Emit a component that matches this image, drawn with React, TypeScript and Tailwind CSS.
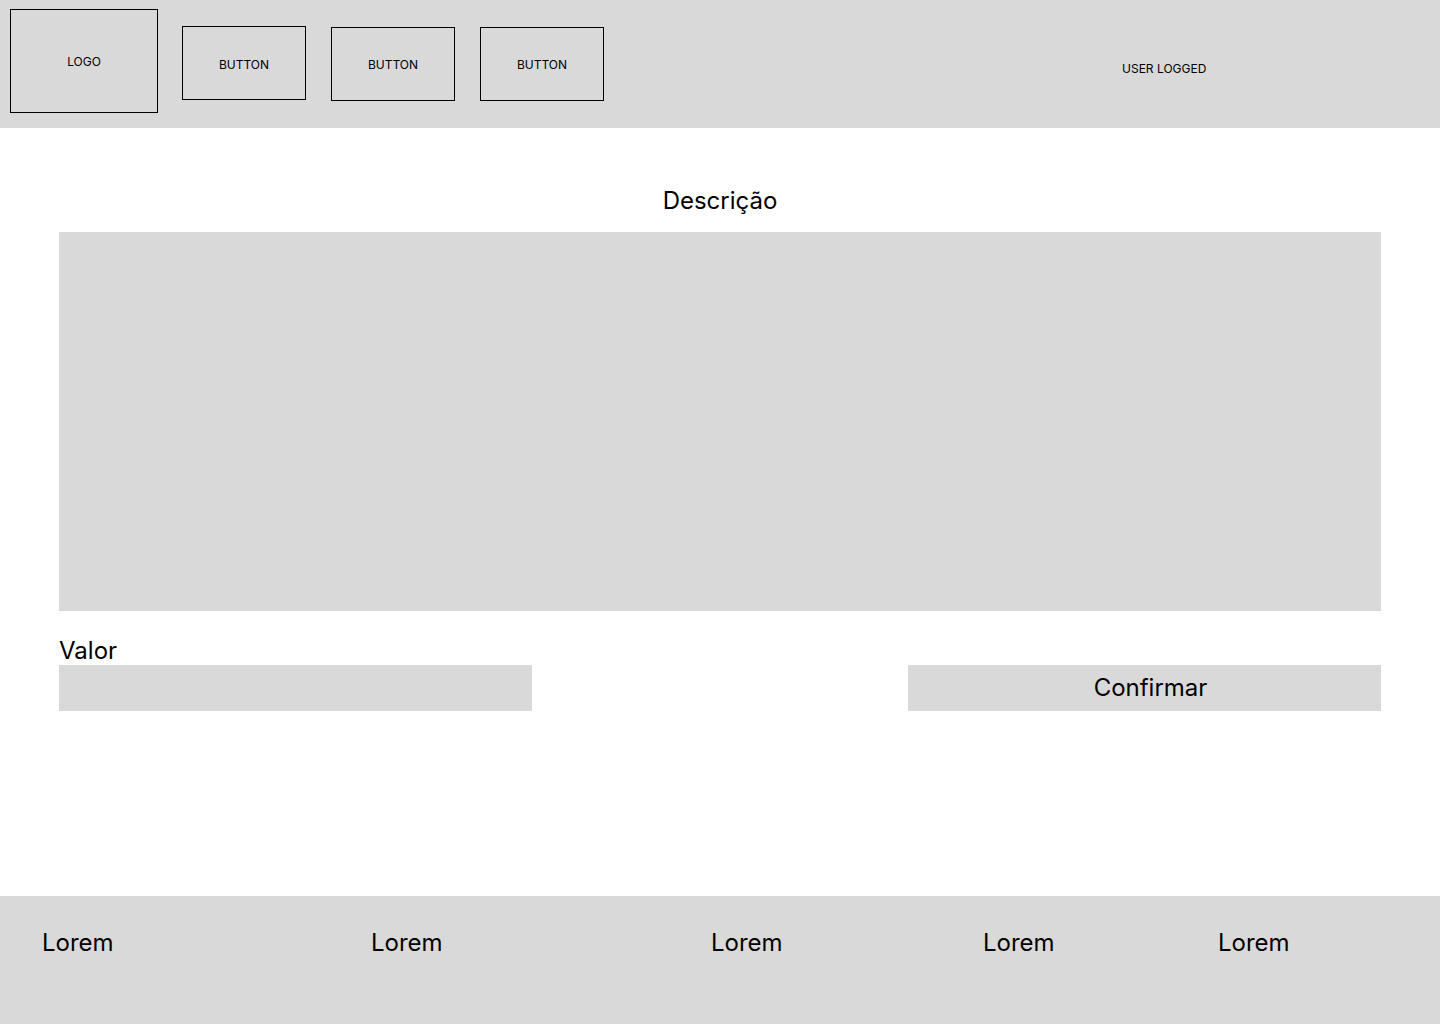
export default function App() {
  const footerCols = ["w-[329px]", "w-[340px]", "w-[272px]", "w-[235px]", "w-[180px]"];

  return (
    <div className="min-h-screen flex flex-col bg-white text-black" style={{ fontFamily: "Inter, 'Noto Sans', sans-serif" }}>
      {/* Header */}
      <header className="h-[128px] bg-[#d9d9d9] flex items-start">
        <div className="ml-[10px] mt-[9px] w-[148px] h-[104px] border border-black flex items-center justify-center pt-[2px] text-[12px]">
          LOGO
        </div>
        <div className="ml-[24px] mt-[26px] w-[124px] h-[74px] border border-black flex items-center justify-center pt-[4px] text-[12px]">
          BUTTON
        </div>
        <div className="ml-[25px] mt-[27px] w-[124px] h-[74px] border border-black flex items-center justify-center pt-[1px] text-[12px]">
          BUTTON
        </div>
        <div className="ml-[25px] mt-[27px] w-[124px] h-[74px] border border-black flex items-center justify-center pt-[1px] text-[12px]">
          BUTTON
        </div>
        <div className="ml-[518px] mt-[60px] text-[12px]">USER LOGGED</div>
      </header>

      {/* Main */}
      <main className="h-[768px] px-[59px] flex flex-col">
        <h2 className="mt-[58px] text-center text-[24px] leading-[29px]">Descrição</h2>
        <div className="mt-[17px] h-[379px] bg-[#d9d9d9]" />
        <label className="mt-[25px] text-[24px] leading-[29px]">Valor</label>
        <div className="flex justify-between">
          <div className="w-[473px] h-[46px] bg-[#d9d9d9]" />
          <button className="w-[473px] h-[46px] bg-[#d9d9d9] text-[24px] pl-[12px]">Confirmar</button>
        </div>
      </main>

      {/* Footer */}
      <footer className="h-[128px] bg-[#d9d9d9] flex items-start pl-[42px] pt-[32px]">
        {footerCols.map((w, i) => (
          <div key={i} className={`${w} text-[24px] leading-[29px]`}>
            Lorem
          </div>
        ))}
      </footer>
    </div>
  );
}
